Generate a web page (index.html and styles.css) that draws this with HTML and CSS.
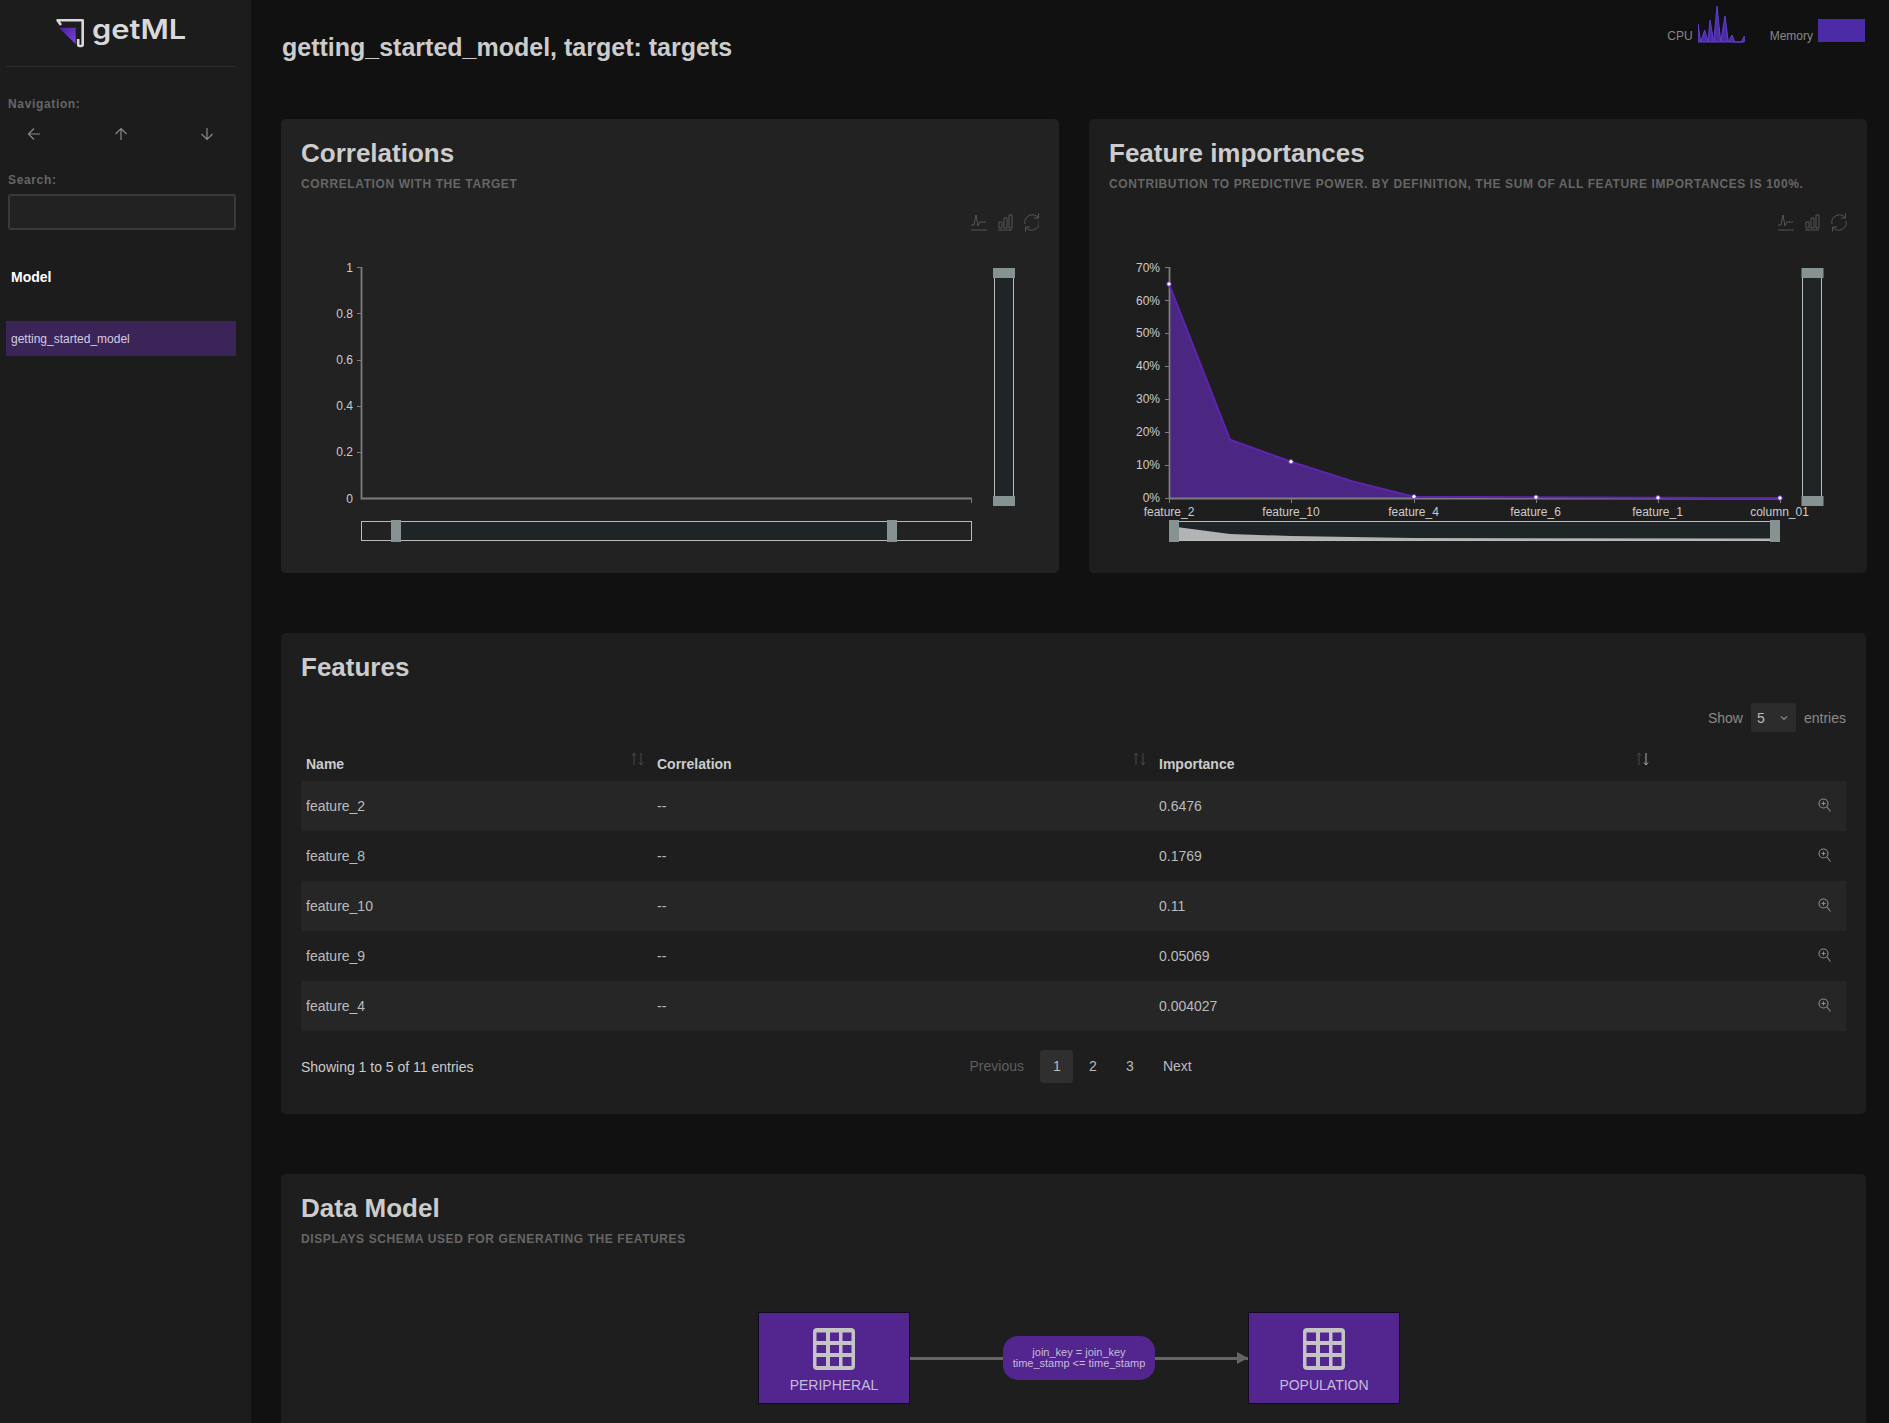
FILE: index.html
```html
<!DOCTYPE html>
<html lang="en">
<head>
  <meta charset="UTF-8" />
  <title>getML - getting_started_model</title>
  <link rel="stylesheet" href="styles.css">
</head>
<body>
  <aside class="sidebar">
    <div class="logo">
      <svg class="logo__mark" viewBox="0 0 30 31">
        <defs>
          <linearGradient id="logo-grad" x1="0" y1="0" x2="1" y2="1">
            <stop offset="0" stop-color="#4a1f9e" />
            <stop offset="1" stop-color="#7a45d8" />
          </linearGradient>
        </defs>
        <path d="M4 10.7 H20.7 V27.3 Z" fill="url(#logo-grad)" />
        <path d="M6 8 L2.5 3.2 H27.7 V27.5 Q27.7 29 26.2 29 H24.6 Q23.2 29 23.2 27.5 V22" fill="none" stroke="#d9d9d9" stroke-width="2.6" stroke-linejoin="round" />
      </svg>
      <span class="logo__text">getML</span>
    </div>

    <div class="sidebar__label sidebar__label--nav">Navigation:</div>
    <div class="nav-arrows">
      <svg class="nav-arrow" viewBox="0 0 14 14"><path d="M13 7 H1.5 M7 1.5 L1.5 7 L7 12.5" /></svg>
      <svg class="nav-arrow" viewBox="0 0 14 14"><path d="M7 13 V1.5 M1.5 7 L7 1.5 L12.5 7" /></svg>
      <svg class="nav-arrow" viewBox="0 0 14 14"><path d="M7 1 V12.5 M1.5 7 L7 12.5 L12.5 7" /></svg>
    </div>

    <div class="sidebar__label sidebar__label--search">Search:</div>
    <input class="search" type="text" />

    <div class="sidebar__group">Model</div>
    <a class="sidebar__item" href="#">getting_started_model</a>
  </aside>

  <main class="main">
    <header class="topbar">
      <h1 class="page-title">getting_started_model, target: targets</h1>
      <div class="monitors">
        <span class="monitor-label">CPU</span>
        <svg class="spark" viewBox="0 0 48 37">
          <path class="spark__line" d="M0 18 L2.7 36 L6.7 24 L10 36 L12 14 L15.7 36 L19 0 L22.7 36 L27 10 L30.3 36 L34 29 L36.7 36 L43.3 36 L46.3 30 V36 H0 Z" />
        </svg>
        <span class="monitor-label monitor-label--memory">Memory</span>
        <div class="memory-bar"></div>
      </div>
    </header>

    <section class="chart-row">
      <div class="card card--light">
        <h2 class="card__title">Correlations</h2>
        <p class="card__sub">Correlation with the target</p>
        <svg class="chart" viewBox="0 0 738 348">
          <g class="toolbox">
            <path d="M670 25 H686 M670 20 L673 20 L675 10 L677 21 L679 17 L685 17" />
            <path d="M697 25 H711 M698 23 V17 H701 V23 Z M703 23 V13 H706 V23 Z M708 23 V10 H711 V23 Z" />
            <path d="M724 19 A7.5 7.5 0 0 1 737 12.5 M738 16 A7.5 7.5 0 0 1 725 22.5 M737.5 8.5 V13 H733 M724.5 26.5 V22 H729" />
          </g>
          <g class="axis">
            <path d="M56 62.5 H60 M56 108.5 H60 M56 155.5 H60 M56 201.5 H60 M56 247.5 H60 M670.5 293 V298" />
            <path class="axis__line" d="M60.5 62 V293.5 H670.5" />
          </g>
          <text class="tick tick--end" x="52" y="67">1</text>
          <text class="tick tick--end" x="52" y="113">0.8</text>
          <text class="tick tick--end" x="52" y="159">0.6</text>
          <text class="tick tick--end" x="52" y="205">0.4</text>
          <text class="tick tick--end" x="52" y="251">0.2</text>
          <text class="tick tick--end" x="52" y="298">0</text>
          <rect class="zoom-fill zoom-frame" x="693.5" y="66" width="19" height="230" />
          <rect class="zoom-handle" x="692" y="63" width="22" height="10" />
          <rect class="zoom-handle" x="692" y="291" width="22" height="10" />
          <rect class="zoom-frame" x="60.5" y="316.5" width="610" height="19" />
          <rect class="zoom-fill" x="95" y="317" width="496" height="18" />
          <rect class="zoom-handle" x="90" y="315" width="10" height="22" />
          <rect class="zoom-handle" x="586" y="315" width="10" height="22" />
        </svg>
      </div>

      <div class="card">
        <h2 class="card__title">Feature importances</h2>
        <p class="card__sub">Contribution to predictive power. By definition, the sum of all feature importances is 100%.</p>
        <svg class="chart" viewBox="0 0 738 348">
          <g class="toolbox">
            <path d="M669 25 H685 M669 20 L672 20 L674 10 L676 21 L678 17 L684 17" />
            <path d="M696 25 H710 M697 23 V17 H700 V23 Z M702 23 V13 H705 V23 Z M707 23 V10 H710 V23 Z" />
            <path d="M723 19 A7.5 7.5 0 0 1 736 12.5 M737 16 A7.5 7.5 0 0 1 724 22.5 M736.5 8.5 V13 H732 M723.5 26.5 V22 H728" />
          </g>
          <path class="area" d="M60 79 L121 234.6 L182 256.7 L243 276.3 L305 291.7 L366 292 L427 292.2 L488 292.6 L549 292.8 L610 293 L671 293 V293.5 H60 Z" />
          <g class="axis">
            <path d="M56 62.5 H60 M56 95.5 H60 M56 128.5 H60 M56 161.5 H60 M56 194.5 H60 M56 227.5 H60 M56 260.5 H60 M56 293.5 H60" />
            <path d="M60.5 293 V298 M182.5 293 V298 M305.5 293 V298 M427.5 293 V298 M549.5 293 V298 M671.5 293 V298" />
            <path class="axis__line" d="M60.5 62 V293.5 H671" />
          </g>
          <path class="area-line" d="M60 79 L121 234.6 L182 256.7 L243 276.3 L305 291.7 L366 292 L427 292.2 L488 292.6 L549 292.8 L610 293 L671 293" />
          <g class="dots">
            <circle cx="60" cy="79" r="2.2" />
            <circle cx="182" cy="256.7" r="2.2" />
            <circle cx="305" cy="291.7" r="2.2" />
            <circle cx="427" cy="292.2" r="2.2" />
            <circle cx="549" cy="292.8" r="2.2" />
            <circle cx="671" cy="293" r="2.2" />
          </g>
          <text class="tick tick--end" x="51" y="67">70%</text>
          <text class="tick tick--end" x="51" y="100">60%</text>
          <text class="tick tick--end" x="51" y="132">50%</text>
          <text class="tick tick--end" x="51" y="165">40%</text>
          <text class="tick tick--end" x="51" y="198">30%</text>
          <text class="tick tick--end" x="51" y="231">20%</text>
          <text class="tick tick--end" x="51" y="264">10%</text>
          <text class="tick tick--end" x="51" y="297">0%</text>
          <text class="tick tick--mid" x="60" y="311">feature_2</text>
          <text class="tick tick--mid" x="182" y="311">feature_10</text>
          <text class="tick tick--mid" x="304.5" y="311">feature_4</text>
          <text class="tick tick--mid" x="426.5" y="311">feature_6</text>
          <text class="tick tick--mid" x="548.5" y="311">feature_1</text>
          <text class="tick tick--mid" x="670.5" y="311">column_01</text>
          <rect class="zoom-fill zoom-frame" x="693.5" y="66" width="19" height="230" />
          <rect class="zoom-handle" x="692.5" y="63" width="22" height="10" />
          <rect class="zoom-handle" x="692.5" y="291" width="22" height="10" />
          <rect class="zoom-fill" x="60" y="317" width="611" height="18" />
          <path class="zoom-preview" d="M60 321 L121 329 L182 331 L305 333 L671 333.5 V335 H60 Z" />
          <rect class="zoom-frame" x="60.5" y="316.5" width="610" height="19" />
          <rect class="zoom-handle" x="60" y="315" width="10" height="22" />
          <rect class="zoom-handle" x="661" y="315" width="10" height="22" />
        </svg>
      </div>
    </section>

    <section class="card card--block">
      <h2 class="card__title">Features</h2>
      <div class="length">
        <span>Show</span>
        <div class="length__select">
          <span>5</span>
          <svg class="length__chevron" viewBox="0 0 8 6"><path d="M1 1.5 L4 4.5 L7 1.5" /></svg>
        </div>
        <span>entries</span>
      </div>
      <table class="table">
        <colgroup>
          <col class="col-name" />
          <col class="col-corr" />
          <col class="col-imp" />
          <col />
        </colgroup>
        <thead>
          <tr>
            <th>Name<svg class="sort" viewBox="0 0 14 14"><path d="M3 13 V1 M1 3.5 L3 1 L5 3.5" /><path d="M10 1 V13 M8 10.5 L10 13 L12 10.5" /></svg></th>
            <th>Correlation<svg class="sort" viewBox="0 0 14 14"><path d="M3 13 V1 M1 3.5 L3 1 L5 3.5" /><path d="M10 1 V13 M8 10.5 L10 13 L12 10.5" /></svg></th>
            <th>Importance<svg class="sort" viewBox="0 0 14 14"><path d="M3 13 V1 M1 3.5 L3 1 L5 3.5" /><path class="sort__on" d="M10 1 V13 M8 10.5 L10 13 L12 10.5" /></svg></th>
            <th></th>
          </tr>
        </thead>
        <tbody>
          <tr><td>feature_2</td><td>--</td><td>0.6476</td><td class="cell-icon"><svg class="lens" viewBox="0 0 13 14"><circle cx="5.5" cy="5.5" r="4.5" /><path d="M5.5 3.5 V7.5 M3.5 5.5 H7.5 M9 9 L12.5 13.5" /></svg></td></tr>
          <tr><td>feature_8</td><td>--</td><td>0.1769</td><td class="cell-icon"><svg class="lens" viewBox="0 0 13 14"><circle cx="5.5" cy="5.5" r="4.5" /><path d="M5.5 3.5 V7.5 M3.5 5.5 H7.5 M9 9 L12.5 13.5" /></svg></td></tr>
          <tr><td>feature_10</td><td>--</td><td>0.11</td><td class="cell-icon"><svg class="lens" viewBox="0 0 13 14"><circle cx="5.5" cy="5.5" r="4.5" /><path d="M5.5 3.5 V7.5 M3.5 5.5 H7.5 M9 9 L12.5 13.5" /></svg></td></tr>
          <tr><td>feature_9</td><td>--</td><td>0.05069</td><td class="cell-icon"><svg class="lens" viewBox="0 0 13 14"><circle cx="5.5" cy="5.5" r="4.5" /><path d="M5.5 3.5 V7.5 M3.5 5.5 H7.5 M9 9 L12.5 13.5" /></svg></td></tr>
          <tr><td>feature_4</td><td>--</td><td>0.004027</td><td class="cell-icon"><svg class="lens" viewBox="0 0 13 14"><circle cx="5.5" cy="5.5" r="4.5" /><path d="M5.5 3.5 V7.5 M3.5 5.5 H7.5 M9 9 L12.5 13.5" /></svg></td></tr>
        </tbody>
      </table>
      <div class="table-foot">
        <div class="table-foot__info">Showing 1 to 5 of 11 entries</div>
        <div class="pager">
          <a class="pager__btn pager__btn--off" href="#">Previous</a>
          <a class="pager__btn pager__btn--on" href="#">1</a>
          <a class="pager__btn" href="#">2</a>
          <a class="pager__btn" href="#">3</a>
          <a class="pager__btn" href="#">Next</a>
        </div>
      </div>
    </section>

    <section class="card card--block card--model">
      <h2 class="card__title">Data Model</h2>
      <p class="card__sub">Displays schema used for generating the features</p>
      <div class="schema">
        <div class="schema__node">
          <svg class="schema__icon" viewBox="0 0 42 42">
            <rect class="grid-bg" width="42" height="42" rx="4" />
            <path class="grid-holes" d="M3.5 4.5 H13 V13 H3.5 Z M17 4.5 H26 V13 H17 Z M29.5 4.5 H38.5 V13 H29.5 Z M3.5 17 H13 V25 H3.5 Z M17 17 H26 V25 H17 Z M29.5 17 H38.5 V25 H29.5 Z M3.5 29 H13 V38 H3.5 Z M17 29 H26 V38 H17 Z M29.5 29 H38.5 V38 H29.5 Z" />
          </svg>
          <span>PERIPHERAL</span>
        </div>
        <div class="schema__link"></div>
        <div class="schema__join">join_key = join_key<br />time_stamp &lt;= time_stamp</div>
        <div class="schema__link schema__link--arrow"></div>
        <div class="schema__node">
          <svg class="schema__icon" viewBox="0 0 42 42">
            <rect class="grid-bg" width="42" height="42" rx="4" />
            <path class="grid-holes" d="M3.5 4.5 H13 V13 H3.5 Z M17 4.5 H26 V13 H17 Z M29.5 4.5 H38.5 V13 H29.5 Z M3.5 17 H13 V25 H3.5 Z M17 17 H26 V25 H17 Z M29.5 17 H38.5 V25 H29.5 Z M3.5 29 H13 V38 H3.5 Z M17 29 H26 V38 H17 Z M29.5 29 H38.5 V38 H29.5 Z" />
          </svg>
          <span>POPULATION</span>
        </div>
      </div>
    </section>
  </main>
</body>
</html>
```

FILE: styles.css
```css
* { margin: 0; padding: 0; box-sizing: border-box; }

html, body {
  height: 100%;
  overflow: hidden;
}

body {
  display: flex;
  font-family: 'Liberation Sans', Arial, sans-serif;
  font-size: 14px;
  color: #bbb;
  background-color: #111;
}

a {
  color: inherit;
  text-decoration: none;
}

/* sidebar */
.sidebar {
  flex: 0 0 251px;
  height: 100%;
  padding: 0 15px 0 6px;
  background-color: #1c1c1c;
}

.logo {
  display: flex;
  align-items: center;
  gap: 7px;
  height: 67px;
  padding: 0 0 7px 49px;
  border-bottom: 1px solid #2c2c2c;
}

.logo__mark {
  flex: none;
  width: 30px;
  height: 31px;
  margin-top: 6px;
}

.logo__text {
  display: inline-block;
  font-family: Inter, sans-serif;
  font-size: 27px;
  font-weight: 600;
  color: #d9d9d9;
  transform: scaleX(1.14);
  transform-origin: left center;
}

.sidebar__label {
  padding-left: 2px;
  font-size: 12px;
  line-height: 16px;
  font-weight: bold;
  letter-spacing: 0.65px;
  color: #666;
}

.sidebar__label--nav { margin-top: 29px; }
.sidebar__label--search { margin-top: 31px; }

.nav-arrows {
  display: flex;
  justify-content: space-between;
  height: 14px;
  margin-top: 15px;
  padding: 0 22px 0 21px;
}

.nav-arrow {
  width: 14px;
  height: 14px;
  fill: none;
  stroke: #888;
  stroke-width: 1.2;
}

.search {
  display: block;
  width: 228px;
  height: 36px;
  margin: 6px 0 0 2px;
  border: 2px solid #3a3a3a;
  border-radius: 3px;
  background-color: #222;
}

.sidebar__group {
  margin-top: 38px;
  padding-left: 5px;
  font-size: 14px;
  line-height: 18px;
  font-weight: bold;
  color: #fff;
}

.sidebar__item {
  display: block;
  height: 35px;
  margin-top: 35px;
  padding-left: 5px;
  font-size: 12px;
  line-height: 36px;
  color: #d5cbe0;
  background-color: #3b2558;
}

/* main column */
.main {
  flex: 1;
  min-width: 0;
  padding: 0 23px 0 30px;
}

.topbar {
  display: flex;
  justify-content: space-between;
  height: 119px;
}

.page-title {
  margin: 33px 0 0 1px;
  font-size: 25px;
  line-height: 28px;
  font-weight: bold;
  color: #ccc;
}

.monitors {
  display: flex;
  align-items: flex-start;
  margin-top: 6px;
  padding-right: 1px;
}

.monitor-label {
  margin-top: 23px;
  font-size: 12px;
  line-height: 14px;
  color: #888;
}

.monitor-label--memory { margin-left: 24px; }

.spark {
  width: 48px;
  height: 37px;
  margin-left: 5px;
}

.spark__line {
  fill: #4c2ca6;
  stroke: #6040d0;
  stroke-width: 1;
}

.memory-bar {
  width: 47px;
  height: 23px;
  margin: 13px 0 0 5px;
  background-color: #4c2ca6;
}

/* cards */
.chart-row {
  display: grid;
  grid-template-columns: 1fr 1fr;
  gap: 30px;
}

.card {
  height: 454px;
  padding: 20px;
  border-radius: 5px;
  background-color: #1e1e1e;
}

.card--light { background-color: #222; }

.card--block {
  height: 481px;
  margin-top: 60px;
}

.card--model { height: 400px; }

.card__title {
  font-size: 26px;
  line-height: 28px;
  font-weight: bold;
  color: #ccc;
}

.card__sub {
  margin-top: 9px;
  font-size: 12px;
  line-height: 16px;
  font-weight: bold;
  letter-spacing: 0.6px;
  text-transform: uppercase;
  color: #666;
}

/* charts */
.chart {
  display: block;
  width: 738px;
  height: 348px;
  margin-top: 13px;
}

.toolbox path {
  fill: none;
  stroke: #555;
  stroke-width: 1;
}

.axis path {
  fill: none;
  stroke: #7d7d7d;
  stroke-width: 1;
}

.axis path.axis__line { stroke-width: 1.8; }

.tick {
  font-size: 12px;
  fill: #ccc;
}

.tick--end { text-anchor: end; }
.tick--mid { text-anchor: middle; }

.area { fill: #4b2683; }

.area-line {
  fill: none;
  stroke: #5c25ad;
  stroke-width: 2;
}

.dots circle {
  fill: #fff;
  stroke: #6a30c0;
  stroke-width: 1;
}

.zoom-fill { fill: #1f2427; }

.zoom-frame {
  stroke: #bbb;
  stroke-width: 1;
}

rect.zoom-frame:not(.zoom-fill) { fill: none; }

.zoom-preview { fill: #b1b3b7; }
.zoom-handle { fill: #879393; }

/* features table */
.length {
  display: flex;
  justify-content: flex-end;
  align-items: center;
  gap: 8px;
  height: 29px;
  margin-top: 22px;
  color: #8a8a8a;
}

.length__select {
  display: flex;
  align-items: center;
  justify-content: space-between;
  width: 45px;
  height: 29px;
  padding: 0 8px 0 6px;
  border-radius: 3px;
  color: #bbb;
  background-color: #2c2c2c;
}

.length__chevron {
  width: 8px;
  height: 6px;
  fill: none;
  stroke: #888;
  stroke-width: 1.2;
}

.table {
  width: 100%;
  table-layout: fixed;
  border-collapse: collapse;
}

.col-name { width: 351px; }
.col-corr { width: 502px; }
.col-imp { width: 503px; }

.table th {
  position: relative;
  height: 49px;
  padding: 0 5px 9px;
  text-align: left;
  vertical-align: bottom;
  line-height: 16px;
  color: #ccc;
}

.sort {
  position: absolute;
  top: 20px;
  right: 7px;
  width: 14px;
  height: 14px;
  fill: none;
  stroke: #484848;
  stroke-width: 1;
}

.sort__on { stroke: #aaa; }

.table td {
  height: 50px;
  padding: 0 5px;
  vertical-align: middle;
}

.table tbody tr:nth-child(odd) { background-color: #262626; }

.cell-icon {
  padding-right: 15px !important;
  text-align: right;
}

.lens {
  display: inline-block;
  width: 13px;
  height: 14px;
  fill: none;
  stroke: #8c8c8c;
  stroke-width: 1.1;
}

.table-foot {
  display: flex;
  align-items: center;
  height: 33px;
  margin-top: 19px;
}

.table-foot__info {
  flex: 0 0 656px;
  color: #ccc;
}

.pager {
  display: flex;
  gap: 4px;
}

.pager__btn {
  min-width: 33px;
  height: 33px;
  padding: 0 12.5px;
  border-radius: 3px;
  line-height: 33px;
  text-align: center;
  color: #bbb;
}

.pager__btn--off { color: #5f5f5f; }

.pager__btn--on {
  margin-right: -1px;
  background-color: #2f2f2f;
}

/* data model */
.schema {
  display: flex;
  align-items: center;
  justify-content: center;
  margin-top: 65px;
  padding-left: 11px;
}

.schema__node {
  display: flex;
  flex-direction: column;
  align-items: center;
  width: 152px;
  height: 92px;
  padding-top: 15px;
  border: 1px solid #120a20;
  font-size: 14px;
  color: #c9bcd9;
  background-color: #52258f;
}

.schema__node span { margin-top: 7px; }

.schema__icon {
  width: 42px;
  height: 42px;
}

.grid-bg { fill: #c4c4c4; }
.grid-holes { fill: #52258f; }

.schema__link {
  position: relative;
  width: 93px;
  height: 3px;
  background-color: #666;
}

.schema__link--arrow::after {
  content: "";
  position: absolute;
  top: -5px;
  right: 0;
  border-left: 11px solid #666;
  border-top: 6.5px solid transparent;
  border-bottom: 6.5px solid transparent;
}

.schema__join {
  display: flex;
  flex-direction: column;
  justify-content: center;
  width: 152px;
  height: 44px;
  border-radius: 15px;
  font-size: 11px;
  line-height: 11px;
  text-align: center;
  color: #c9bcd9;
  background-color: #52258f;
}
```
